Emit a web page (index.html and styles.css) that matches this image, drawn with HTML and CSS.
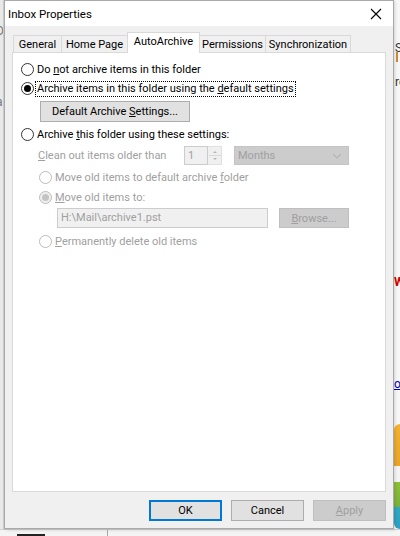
FILE: index.html
```html
<!DOCTYPE html>
<html>
<head>
<meta charset="utf-8">
<link rel="stylesheet" href="styles.css">
</head>
<body>
<div class="desktop">
  <div class="bg-left">
    <span class="bg-txt bl1">D</span>
    <span class="bg-txt bl2">a</span>
  </div>
  <div class="bg-right">
    <span class="bg-txt br1">S</span>
    <span class="br-orange"></span>
    <span class="bg-txt br2">re</span>
    <span class="bg-txt br3">W</span>
    <span class="bg-txt br4">or</span>
    <span class="br-art"></span>
  </div>

  <div class="dialog">
    <div class="titlebar">
      <span class="title">Inbox Properties</span>
      <svg class="close" width="12" height="12" viewBox="0 0 12 12"><path d="M1 1 L11 11 M11 1 L1 11" stroke="#000" stroke-width="1.1" fill="none"/></svg>
    </div>
    <div class="body">
      <div class="tabs">
        <div class="tab w1">General</div>
        <div class="tab w2">Home Page</div>
        <div class="tab sel w3">AutoArchive</div>
        <div class="tab w4">Permissions</div>
        <div class="tab w5">Synchronization</div>
      </div>
      <div class="panel">
        <div class="row r1">
          <span class="radio"></span>
          <span class="lbl">Do <u>n</u>ot archive items in this folder</span>
        </div>
        <div class="row r2">
          <span class="radio on"></span>
          <span class="lbl focus">Archive items in this folder using the <u>d</u>efault settings</span>
        </div>
        <div class="row btnrow">
          <button class="btn defbtn"><span>Default Archive <u>S</u>ettings...</span></button>
        </div>
        <div class="row r3">
          <span class="radio"></span>
          <span class="lbl">Archive <u>t</u>his folder using these settings:</span>
        </div>
        <div class="row clean">
          <span class="lbl dis cleanlbl"><u>C</u>lean out items older than</span>
          <span class="spin">
            <span class="spinval">1</span>
            <span class="spinarrows">
              <svg width="14" height="19" viewBox="0 0 14 19"><path d="M5 7 L7 5 L9 7 Z M5 12 L7 14 L9 12 Z" fill="#b5b5b5"/><path d="M1 9.5 H13" stroke="#d8d8d8"/></svg>
            </span>
          </span>
          <span class="combo">
            <span>Months</span>
            <svg width="10" height="6" viewBox="0 0 10 6"><path d="M1 1 L5 5 L9 1" stroke="#b5b5b5" stroke-width="1.2" fill="none"/></svg>
          </span>
        </div>
        <div class="row sub r4">
          <span class="radio dis"></span>
          <span class="lbl dis">Move old items to default archive <u>f</u>older</span>
        </div>
        <div class="row sub r5">
          <span class="radio dis on"></span>
          <span class="lbl dis"><u>M</u>ove old items to:</span>
        </div>
        <div class="row pathrow">
          <span class="pathbox">H:\Mail\archive1.pst</span>
          <button class="btn dbtn browse"><span><u>B</u>rowse...</span></button>
        </div>
        <div class="row sub r6">
          <span class="radio dis"></span>
          <span class="lbl dis"><u>P</u>ermanently delete old items</span>
        </div>
      </div>
      <div class="buttons">
        <button class="btn ok"><span>OK</span></button>
        <button class="btn"><span>Cancel</span></button>
        <button class="btn dbtn"><span><u>A</u>pply</span></button>
      </div>
    </div>
  </div>
  <div class="bg-bottom">
    <span class="bg-time"></span>
    <span class="bg-sep"></span>
  </div>
</div>
</body>
</html>
```
FILE: styles.css
```css
* { box-sizing: border-box; }
html, body { margin: 0; padding: 0; }
body {
  width: 400px;
  height: 536px;
  overflow: hidden;
  background: #f4f4f4;
  font-family: Roboto, "Liberation Sans", Arial, sans-serif;
  font-size: 11px;
  color: #000;
}
.desktop {
  position: relative;
  width: 400px;
  height: 536px;
  display: flex;
  justify-content: space-between;
}
.bg-left {
  position: relative;
  width: 4px;
  height: 536px;
  background: #e9e9e9;
  border-right: 1px solid #cfcfcf;
  overflow: hidden;
}
.bg-right {
  position: relative;
  width: 7px;
  height: 536px;
  background: #f7f7f7;
  overflow: hidden;
}
.bg-txt {
  position: absolute;
  font-size: 12px;
  color: #333;
  line-height: 12px;
}
.bl1 { left: -4px; top: 25px; color: #777; }
.bl2 { left: -4px; top: 96px; color: #777; }
.br1 { left: 2px; top: 42px; }
.br-orange { position: absolute; left: 3px; top: 52px; width: 2px; height: 10px; background: #d08a3a; }
.br2 { left: 2px; top: 76px; }
.br3 { left: 1px; top: 276px; color: #c00; font-weight: bold; }
.br4 { left: 1px; top: 378px; color: #0000c0; text-decoration: underline; }
.br-art {
  position: absolute;
  left: 1px; top: 424px;
  width: 8px; height: 105px;
  background: linear-gradient(#f2b233 0, #e8a52a 40%, #f4f4f4 40%, #f4f4f4 55%, #8fbf3a 55%, #7bb23a 78%, #31a7c2 80%, #2d9fc0 100%);
  border-radius: 6px 0 0 6px;
}
.bg-bottom {
  position: absolute;
  left: 0; bottom: 0;
  width: 400px; height: 7px;
  background: #f4f4f4;
  border-top: 1px solid #d0d0d0;
}
.bg-time { position: absolute; left: 17px; top: 4px; width: 28px; height: 3px; background: #222; }
.bg-sep { position: absolute; left: 107px; top: 0; width: 1px; height: 7px; background: #aaa; }

.dialog {
  position: absolute;
  left: 4px;
  top: 0;
  width: 390px;
  height: 529px;
  border: 1px solid #a9a9a9;
  background: #f0f0f0;
  box-shadow: 1px 1px 3px rgba(0,0,0,0.15);
  display: flex;
  flex-direction: column;
  z-index: 2;
}
.titlebar {
  height: 25px;
  background: #fff;
  display: flex;
  align-items: center;
  justify-content: space-between;
  padding: 0 11px 0 3px;
}
.title { font-size: 11.5px; }
.close { display: block; }

.body {
  flex: 1;
  padding: 6px 7px 0 7px;
  display: flex;
  flex-direction: column;
}
.tabs {
  display: flex;
  align-items: flex-end;
  height: 20px;
  padding-left: 1px;
  position: relative;
  z-index: 1;
}
.tab {
  height: 17px;
  background: #f0f0f0;
  border: 1px solid #d9d9d9;
  border-bottom: none;
  border-right: none;
  display: flex;
  align-items: center;
  justify-content: center;
  padding-bottom: 0;
  white-space: nowrap;
}
.tab.w5 { border-right: 1px solid #d9d9d9; }
.tab.sel {
  height: 21px;
  background: #fff;
  margin-bottom: -1px;
  border-right: 1px solid #d9d9d9;
  padding-bottom: 3px;
}
.tab.sel + .tab { border-left: none; }
.w1 { width: 48px; }
.w2 { width: 66px; }
.w3 { width: 73px; }
.w4 { width: 65px; }
.w5 { width: 86px; }

.panel {
  height: 440px;
  width: 374px;
  background: #fff;
  border: 1px solid #d9d9d9;
  padding: 7px 0 0 8px;
  display: flex;
  flex-direction: column;
}
.row {
  display: flex;
  align-items: center;
  height: 19px;
}
.radio {
  width: 13px;
  height: 13px;
  border: 1px solid #333;
  border-radius: 50%;
  background: #fff;
  flex: none;
  position: relative;
  margin-right: 2px;
}
.radio.on::after {
  content: "";
  position: absolute;
  left: 2px; top: 2px;
  width: 7px; height: 7px;
  border-radius: 50%;
  background: #000;
}
.radio.dis { border-color: #bcbcbc; }
.radio.dis.on { background: #f0f0f0; }
.radio.dis.on::after { background: #c4c4c4; }
.lbl { padding: 0 1px; line-height: 14px; white-space: nowrap; }
.lbl.focus { outline: 1px dotted #000; outline-offset: 0; }
.lbl.dis { color: #a0a0a0; }

.btn {
  font-family: inherit;
  font-size: 11px;
  color: #000;
  background: #e1e1e1;
  border: 1px solid #adadad;
  height: 21px;
  padding: 0;
  margin: 0;
  display: flex;
  align-items: center;
  justify-content: center;
  white-space: nowrap;
}
.btn.dbtn { background: #cccccc; border-color: #bfbfbf; color: #a0a0a0; }
.btn.ok { border: 2px solid #0078d7; }

.btnrow { height: 21px; margin-top: 3px; padding-left: 19px; }
.defbtn { width: 150px; }
.r3 { margin-top: 3px; }
.clean { margin-top: 2px; padding-left: 17px; }
.cleanlbl { width: 146px; padding-left: 0; }
.spin {
  display: flex;
  height: 19px;
}
.spinval {
  width: 24px;
  height: 19px;
  border: 1px solid #cccccc;
  background: #f0f0f0;
  color: #a0a0a0;
  padding-left: 3px;
  line-height: 17px;
}
.spinarrows {
  width: 14px;
  height: 19px;
  background: #f0f0f0;
  border: 1px solid #e0e0e0;
  border-left: none;
}
.spinarrows svg { display: block; margin-top: -1px; }
.combo {
  width: 115px;
  height: 19px;
  margin-left: 12px;
  background: #cccccc;
  border: 1px solid #c4c4c4;
  color: #a0a0a0;
  display: flex;
  align-items: center;
  justify-content: space-between;
  padding: 0 6px 0 3px;
}
.combo svg { display: block; }
.sub { padding-left: 18px; }
.r4 { margin-top: 3px; }
.r5 { margin-top: 1px; }
.pathrow { height: 20px; margin-top: 1px; padding-left: 36px; }
.pathbox {
  width: 211px;
  height: 20px;
  background: #f0f0f0;
  border: 1px solid #cccccc;
  color: #a0a0a0;
  padding-left: 3px;
  line-height: 18px;
}
.browse { width: 70px; height: 20px; margin-left: 11px; }
.r6 { margin-top: 4px; }

.buttons {
  display: flex;
  justify-content: flex-end;
  gap: 9px;
  margin-top: 8px;
  width: 374px;
}
.buttons .btn { width: 73px; }
```
